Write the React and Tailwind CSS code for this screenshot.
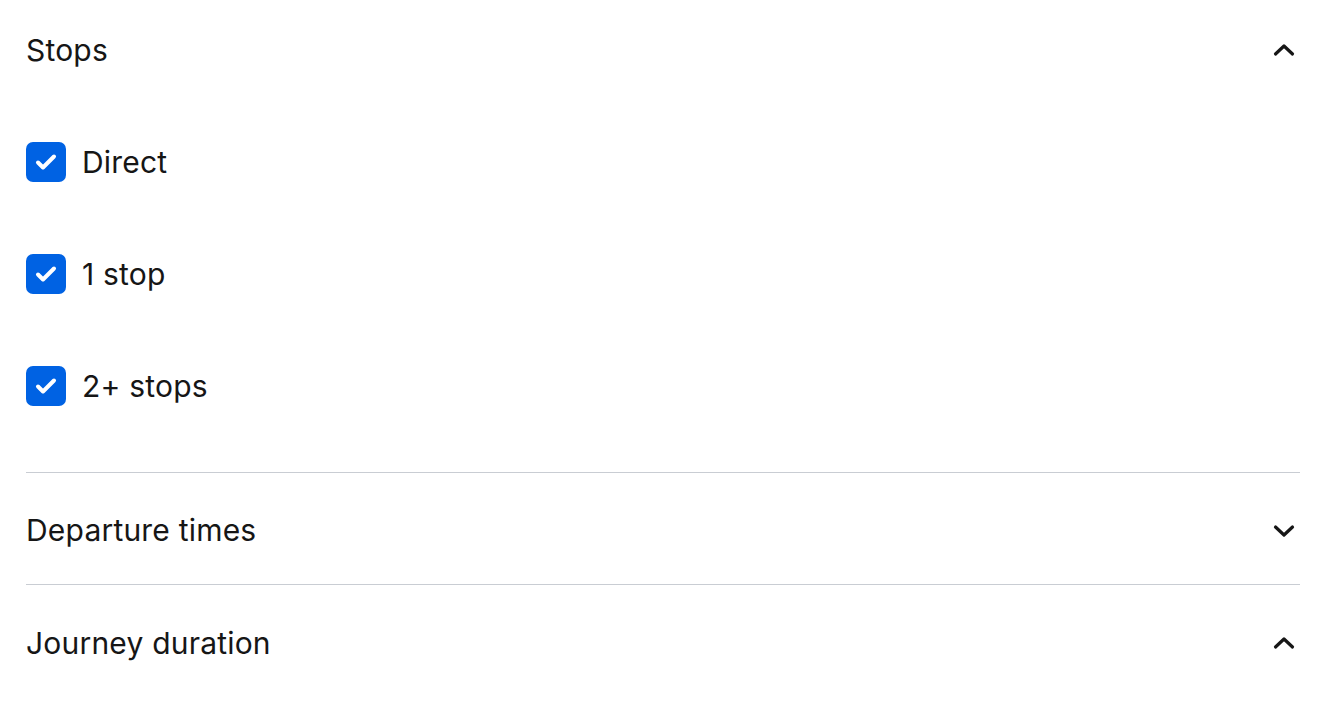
import React, { useState } from "react";

function Chevron({ up }) {
  return (
    <svg width="24" height="24" viewBox="0 0 24 24" fill="none" className="text-[#161616] mr-[4px]">
      <path
        d={up ? "M3.5 16l8.5-8 8.5 8" : "M3.5 8l8.5 8 8.5-8"}
        stroke="currentColor"
        strokeWidth="3.2"
        strokeLinecap="round"
        strokeLinejoin="round"
      />
    </svg>
  );
}

function Check({ label, checked, onToggle }) {
  return (
    <label className="flex items-center gap-4 h-[112px] cursor-pointer" onClick={onToggle}>
      <span
        className={`w-10 h-10 rounded-[7px] flex items-center justify-center ${
          checked ? "bg-[#0062e3]" : "border-2 border-[#c1c7cf] bg-white"
        }`}
      >
        {checked && (
          <svg width="40" height="40" viewBox="0 0 40 40" fill="none">
            <path
              d="M12 20.5L17 25.5L28 14.5"
              stroke="white"
              strokeWidth="4"
              strokeLinecap="round"
              strokeLinejoin="round"
            />
          </svg>
        )}
      </span>
      <span>{label}</span>
    </label>
  );
}

export default function App() {
  const [stops, setStops] = useState({ direct: true, one: true, two: true });
  const [open, setOpen] = useState({ stops: true, departure: false, duration: true });

  const toggle = (k) => setStops({ ...stops, [k]: !stops[k] });

  return (
    <div className="bg-white min-h-screen pl-[26px] pr-[20px] text-[#161616] text-[30px] font-['Inter','Noto_Sans',sans-serif] tracking-[0.2px]">
      {/* Stops */}
      <div className="border-b border-[#c9cdd3]">
        <button
          className="w-full h-[100px] flex items-center justify-between"
          onClick={() => setOpen({ ...open, stops: !open.stops })}
        >
          <span>Stops</span>
          <Chevron up={open.stops} />
        </button>
        {open.stops && (
          <div className="mt-[6px] pb-[30px]">
            <Check label="Direct" checked={stops.direct} onToggle={() => toggle("direct")} />
            <Check label="1 stop" checked={stops.one} onToggle={() => toggle("one")} />
            <Check label="2+ stops" checked={stops.two} onToggle={() => toggle("two")} />
          </div>
        )}
      </div>

      {/* Departure times */}
      <div className="border-b border-[#c9cdd3]">
        <button
          className="w-full h-[111px] pt-[4px] flex items-center justify-between"
          onClick={() => setOpen({ ...open, departure: !open.departure })}
        >
          <span>Departure times</span>
          <Chevron up={open.departure} />
        </button>
      </div>

      {/* Journey duration */}
      <div>
        <button
          className="w-full h-[114px] pt-[2px] flex items-center justify-between"
          onClick={() => setOpen({ ...open, duration: !open.duration })}
        >
          <span>Journey duration</span>
          <Chevron up={open.duration} />
        </button>
      </div>
    </div>
  );
}
